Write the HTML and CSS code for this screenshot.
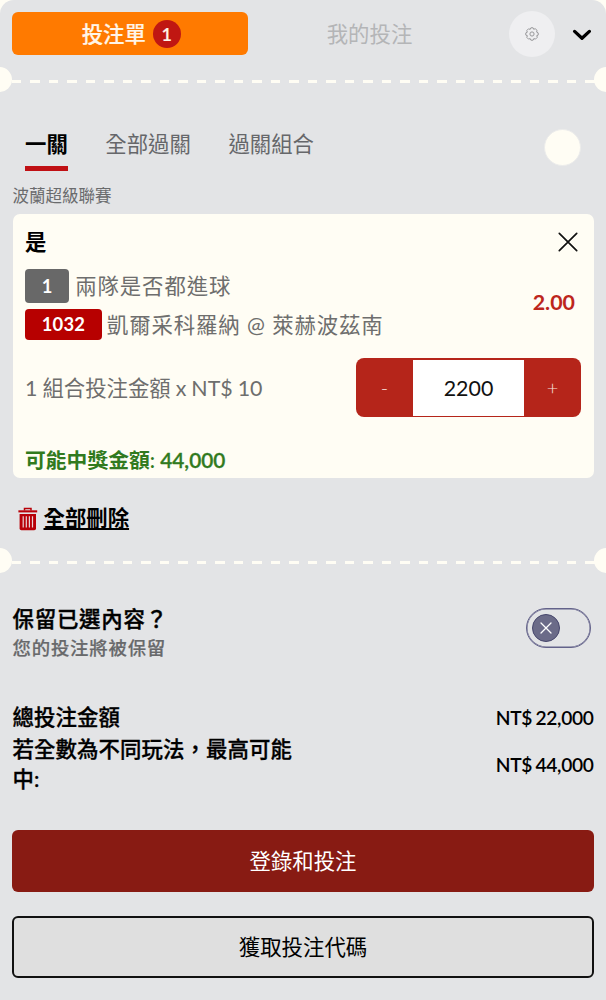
FILE: index.html
```html
<!DOCTYPE html>
<html lang="zh-TW">
<head>
  <meta charset="UTF-8" />
  <meta name="viewport" content="width=device-width, initial-scale=1.0"/>
  <title>投注單</title>
  <link rel="stylesheet" href="styles.css">
</head>
<body>
  <div class="betslip">
    <div class="header">
      <button class="slip-tab active">投注單 <span class="count">1</span></button>
      <button class="slip-tab">我的投注</button>
      <button class="settings">
        <svg width="14" height="14" viewBox="0 0 14 14" fill="none" stroke="#98989a" stroke-width="1" stroke-linejoin="round">
          <path d="M5.9 .8 H8.1 L8.7 2.3 L10.2 1.7 L12.1 3.4 L11.6 5.1 L13.2 5.9 V8.1 L11.7 8.7 L12.3 10.3 L10.5 12.1 L8.8 11.6 L8.1 13.2 H5.9 L5.2 11.6 L3.5 12.1 L1.8 10.4 L2.4 8.7 L.8 8.1 V5.9 L2.3 5.2 L1.8 3.5 L3.5 1.8 L5.2 2.4Z"/>
          <circle cx="7" cy="7" r="2.1"/>
        </svg>
      </button>
      <button class="collapse">
        <svg width="20" height="12" viewBox="0 0 20 12" fill="none" stroke="#000" stroke-width="3.3" stroke-linecap="round" stroke-linejoin="round">
          <path d="M2.6 2.4 L10 9.2 L17.4 2.4"/>
        </svg>
      </button>
    </div>

    <div class="divider"></div>

    <div class="types">
      <span class="type active">一關</span>
      <span class="type">全部過關</span>
      <span class="type">過關組合</span>
      <span class="dot"></span>
    </div>

    <div class="league">波蘭超級聯賽</div>

    <div class="card">
      <div class="card-top">
        <strong>是</strong>
        <svg width="20" height="20" viewBox="0 0 20 20" fill="none" stroke="#111" stroke-width="1.7" stroke-linecap="round">
          <path d="M1.3 1.3 L18.7 18.7 M18.7 1.3 L1.3 18.7"/>
        </svg>
      </div>
      <div class="event">
        <div class="event-info">
          <div class="line"><span class="tag grey">1</span>兩隊是否都進球</div>
          <div class="line match"><span class="tag red">1032</span>凱爾采科羅納 @ 萊赫波茲南</div>
        </div>
        <div class="odds">2.00</div>
      </div>
      <div class="stake">
        <span class="stake-label">1 組合投注金額 x NT$ 10</span>
        <div class="stepper">
          <button>-</button>
          <div class="amount">2200</div>
          <button>+</button>
        </div>
      </div>
      <div class="win">可能中獎金額: <span class="win-amount">44,000</span></div>
    </div>

    <div class="remove">
      <svg width="20" height="24" viewBox="0 0 20 24">
        <path d="M6.5 3.5 V1.4 H13 V3.5" fill="none" stroke="#b80008" stroke-width="1.5"/>
        <path d="M.4 3.3 H19.2 V5.4 H.4Z" fill="#b80008"/>
        <path d="M1.6 7 H18 V21.4 Q18 23.2 16.2 23.2 H3.4 Q1.6 23.2 1.6 21.4Z" fill="#b80008"/>
        <path d="M5.2 9.2 V20.6 M8.3 9.2 V20.6 M11.4 9.2 V20.6 M14.5 9.2 V20.6" stroke="#e8d2d5" stroke-width="1.2"/>
      </svg>
      <a>全部刪除</a>
    </div>

    <div class="divider"></div>

    <div class="keep">
      <div class="keep-text">
        <div class="keep-title">保留已選內容？</div>
        <div class="keep-sub">您的投注將被保留</div>
      </div>
      <div class="switch">
        <div class="knob">
          <svg width="12" height="12" viewBox="0 0 12 12" stroke="#fff" stroke-width="1.3" stroke-linecap="round">
            <path d="M1 1 L11 11 M11 1 L1 11"/>
          </svg>
        </div>
      </div>
    </div>

    <div class="totals">
      <div class="total">
        <span class="label">總投注金額</span>
        <span class="value">NT$ 22,000</span>
      </div>
      <div class="total">
        <span class="label">若全數為不同玩法，最高可能中:</span>
        <span class="value">NT$ 44,000</span>
      </div>
    </div>

    <button class="btn primary">登錄和投注</button>
    <button class="btn outline">獲取投注代碼</button>
  </div>
</body>
</html>
```
FILE: styles.css
```css
* {
  box-sizing: border-box;
}
body {
  margin: 0;
  background: #fffdf4;
  font-family: Lato, "Noto Sans CJK TC", sans-serif;
  font-size: 21.4px;
  color: #000;
}
button {
  font: inherit;
  border: none;
  background: none;
  padding: 0;
}
svg {
  display: block;
}
.betslip {
  height: 1000px;
  overflow: hidden;
  background: #e3e4e6;
  border-radius: 14px 14px 0 0;
}
.header {
  display: flex;
  align-items: center;
  height: 67px;
  padding: 0 12px;
}
.slip-tab {
  width: 235.5px;
  height: 43px;
  display: flex;
  align-items: center;
  justify-content: center;
  gap: 7px;
  padding-bottom: 3px;
  border-radius: 6px;
  color: #b4b5b7;
}
.slip-tab.active {
  padding: 0 0 2px 3px;
  background: #ff7a00;
  color: #fff5e8;
  font-weight: 500;
  -webkit-text-stroke: .2px;
}
.count {
  width: 28px;
  height: 28px;
  margin-top: 2px;
  line-height: 28px;
  border-radius: 50%;
  background: #c01712;
  font-size: 18px;
  font-weight: 600;
}
.slip-tab + .slip-tab {
  width: 244px;
}
.settings {
  width: 46px;
  height: 46px;
  margin-left: 17px;
  display: flex;
  align-items: center;
  justify-content: center;
  border-radius: 50%;
  background: #efeff1;
}
.collapse {
  margin: 2px 0 0 17px;
}
.divider {
  position: relative;
  height: 25px;
  background: repeating-linear-gradient(to right, #fffdf4 0 9.5px, transparent 9.5px 18.5px) 11.5px 13px / 583px 3px no-repeat;
}
.divider::before,
.divider::after {
  content: "";
  position: absolute;
  top: 0;
  left: -13px;
  width: 25px;
  height: 25px;
  border-radius: 50%;
  background: #fffdf4;
}
.divider::after {
  left: auto;
  right: -12.5px;
}
.types {
  display: flex;
  align-items: center;
  gap: 37.5px;
  height: 90px;
  padding: 16px 25px 0;
}
.type {
  height: 51px;
  line-height: 49px;
  color: #66676a;
}
.type.active {
  color: #000;
  font-weight: 700;
  border-bottom: 5px solid #c01014;
}
.dot {
  width: 37px;
  height: 37px;
  margin-left: auto;
  margin-top: 4px;
  border-radius: 50%;
  border: 1px solid #ececeb;
  background: #fffdf4;
}
.league {
  height: 32px;
  line-height: 28px;
  padding-left: 12.5px;
  font-size: 16.5px;
  color: #6a6b6d;
}
.card {
  height: 264px;
  margin: 0 12.5px;
  padding: 0 12.5px;
  border-radius: 7px;
  background: #fffdf4;
}
.card-top {
  display: flex;
  align-items: center;
  justify-content: space-between;
  height: 55px;
  padding-right: 3px;
}
.card-top strong {
  padding-bottom: 3px;
}
.event {
  display: flex;
  align-items: center;
  justify-content: space-between;
  height: 71px;
  color: #6e6e6d;
}
.line {
  display: flex;
  align-items: center;
  gap: 6px;
  height: 34px;
  line-height: 31px;
  letter-spacing: .9px;
}
.line.match {
  margin-top: 6px;
  height: 31px;
  line-height: 28px;
  gap: 5px;
}
.tag {
  padding: 0 16.7px;
  border-radius: 4px;
  color: #fff;
  font-size: 18.4px;
  font-weight: 700;
  letter-spacing: .2px;
}
.tag.grey {
  line-height: 34px;
  background: #686868;
}
.tag.red {
  line-height: 31px;
  background: #b70000;
}
.odds {
  margin: -6px 6px 0 0;
  color: #bd261c;
  font-weight: 700;
}
.stake {
  display: flex;
  align-items: center;
  justify-content: space-between;
  height: 59px;
  margin-top: 18px;
  color: #6e6e6d;
}
.stake-label {
  padding-bottom: 3px;
  word-spacing: -.5px;
}
.stepper {
  display: flex;
  width: 225px;
  height: 59px;
  padding: 1.5px 0;
  border-radius: 8px;
  background: #b5251a;
}
.stepper button {
  width: 57px;
  padding-bottom: 2px;
  color: #f7e0dc;
  font-size: 20px;
  font-weight: 300;
}
.amount {
  flex: 1;
  line-height: 56px;
  text-align: center;
  background: #fff;
  color: #111;
}
.win {
  margin-top: 27px;
  line-height: 32px;
  color: #317a1e;
  font-size: 20.8px;
  font-weight: 600;
}
.win-amount {
  -webkit-text-stroke: .3px;
}
.remove {
  display: flex;
  align-items: center;
  gap: 5.5px;
  height: 70px;
  padding: 11px 0 0 18px;
  font-weight: 700;
}
.remove a {
  margin-top: -4px;
  text-decoration: underline;
}
.keep {
  display: flex;
  align-items: center;
  justify-content: space-between;
  height: 110px;
  padding: 0 15.5px 0 12.5px;
}
.keep-text {
  padding-top: 8px;
}
.keep-title {
  line-height: 32px;
  font-weight: 500;
  letter-spacing: .8px;
  -webkit-text-stroke: .4px;
}
.keep-sub {
  line-height: 27px;
  font-size: 18.4px;
  font-weight: 500;
  letter-spacing: .8px;
  color: #68696b;
  -webkit-text-stroke: .2px;
}
.switch {
  width: 65px;
  height: 40px;
  padding: 5px;
  border: 1.5px solid #63628a;
  border-radius: 20px;
  box-shadow: inset 0 0 0 .5px #63628a;
}
.knob {
  display: flex;
  align-items: center;
  justify-content: center;
  width: 28px;
  height: 28px;
  border: 1.5px solid #46466c;
  border-radius: 50%;
  background: #6b6b88;
}
.totals {
  height: 147px;
  padding: 17px 12.5px 0;
}
.total {
  display: flex;
  align-items: center;
  justify-content: space-between;
  line-height: 30.6px;
  font-weight: 500;
}
.label {
  width: 290px;
  letter-spacing: .1px;
  -webkit-text-stroke: .3px;
}
.value {
  padding-top: 3px;
  font-size: 19.2px;
  font-weight: 600;
  letter-spacing: -.35px;
  word-spacing: -1px;
}
.btn {
  display: block;
  width: 582px;
  height: 62px;
  margin: 0 12px 24px;
  padding-bottom: 3px;
  border-radius: 6px;
}
.btn.primary {
  background: #881b13;
  color: #fff;
}
.btn.outline {
  background: #dfdfdf;
  border: 2px solid #111;
}
```
